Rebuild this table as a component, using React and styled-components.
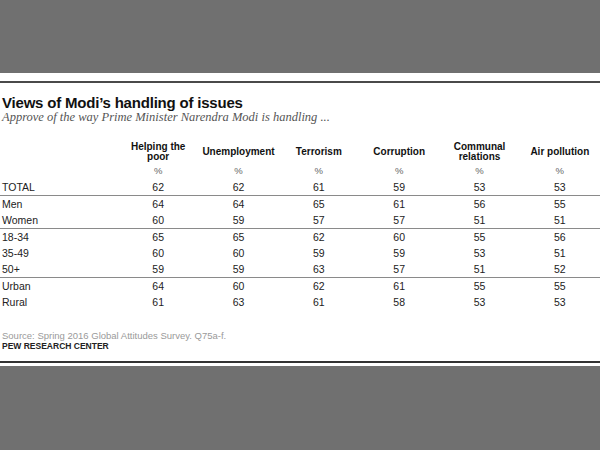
import React from "react";
import styled, { createGlobalStyle } from "styled-components";

const Global = createGlobalStyle`
  html, body { margin: 0; padding: 0; background: #707070; }
  body { width: 600px; height: 450px; overflow: hidden; font-family: "Liberation Sans", Arial, sans-serif; }
`;

const Card = styled.div`
  margin-top: 73px;
  height: 293px;
  background: #fff;
  display: flex;
  flex-direction: column;
  padding-top: 8px;
  padding-bottom: 3px;
  box-sizing: border-box;
`;

const Rule = styled.div`
  height: ${(p) => p.$h}px;
  background: ${(p) => p.$c};
  flex-shrink: 0;
  margin-top: ${(p) => (p.$bottom ? "auto" : "0")};
`;

const Title = styled.h1`
  margin: 12px 0 0 2px;
  font-family: "Liberation Sans", Arial, sans-serif;
  font-weight: 700;
  font-size: 15px;
  letter-spacing: -0.2px;
  line-height: 16px;
  color: #111;
`;

const Subtitle = styled.div`
  margin-left: 2px;
  font-family: "Liberation Serif", "Times New Roman", serif;
  font-style: italic;
  font-size: 12.5px;
  line-height: 13px;
  color: #555;
`;

const Table = styled.div`
  margin-top: 16.7px;
  display: grid;
  grid-template-columns: 118px repeat(6, 1fr);
`;

const HeadCell = styled.div`
  height: 22px;
  display: flex;
  align-items: center;
  justify-content: center;
  text-align: center;
  font-weight: 700;
  font-size: 10px;
  line-height: 10px;
  color: #111;
`;

const Cell = styled.div`
  height: 16px;
  line-height: 16px;
  color: ${(p) => (p.$muted ? "#666" : "#222")};
  text-align: ${(p) => (p.$label ? "left" : "center")};
  padding-left: ${(p) => (p.$label ? "2px" : "0")};
  border-bottom: ${(p) => (p.$divide ? "1px solid #8a8a8a" : "none")};
  font-size: ${(p) => (p.$muted ? "9.5px" : "10.5px")};
`;

const Source = styled.div`
  margin: 20px 0 0 2px;
  font-size: 9.5px;
  line-height: 11px;
  color: #9a9a9a;
`;

const Brand = styled.div`
  margin-left: 2px;
  font-size: 8.5px;
  font-weight: 700;
  line-height: 10px;
  color: #222;
`;

const headers = [
  ["Helping the", "poor"],
  ["Unemployment"],
  ["Terrorism"],
  ["Corruption"],
  ["Communal", "relations"],
  ["Air pollution"],
];

const rows = [
  { label: "TOTAL", v: [62, 62, 61, 59, 53, 53], divide: true },
  { label: "Men", v: [64, 64, 65, 61, 56, 55] },
  { label: "Women", v: [60, 59, 57, 57, 51, 51], divide: true },
  { label: "18-34", v: [65, 65, 62, 60, 55, 56] },
  { label: "35-49", v: [60, 60, 59, 59, 53, 51] },
  { label: "50+", v: [59, 59, 63, 57, 51, 52], divide: true },
  { label: "Urban", v: [64, 60, 62, 61, 55, 55] },
  { label: "Rural", v: [61, 63, 61, 58, 53, 53] },
];

export default function App() {
  return (
    <>
      <Global />
      <Card>
        <Rule $h={2} $c="#4a4a4a" />
        <Title>Views of Modi’s handling of issues</Title>
        <Subtitle>Approve of the way Prime Minister Narendra Modi is handling ...</Subtitle>
        <Table>
          <HeadCell />
          {headers.map((h, i) => (
            <HeadCell key={i}>
              {h.map((line, j) => (
                <React.Fragment key={j}>
                  {j > 0 && <br />}
                  {line}
                </React.Fragment>
              ))}
            </HeadCell>
          ))}
          <Cell />
          {headers.map((_, i) => (
            <Cell key={i} $muted>%</Cell>
          ))}
          {rows.map((r) => (
            <React.Fragment key={r.label}>
              <Cell $label $divide={r.divide}>{r.label}</Cell>
              {r.v.map((n, i) => (
                <Cell key={i} $divide={r.divide}>{n}</Cell>
              ))}
            </React.Fragment>
          ))}
        </Table>
        <Source>Source: Spring 2016 Global Attitudes Survey. Q75a-f.</Source>
        <Brand>PEW RESEARCH CENTER</Brand>
        <Rule $h={2} $c="#333" $bottom />
      </Card>
    </>
  );
}
